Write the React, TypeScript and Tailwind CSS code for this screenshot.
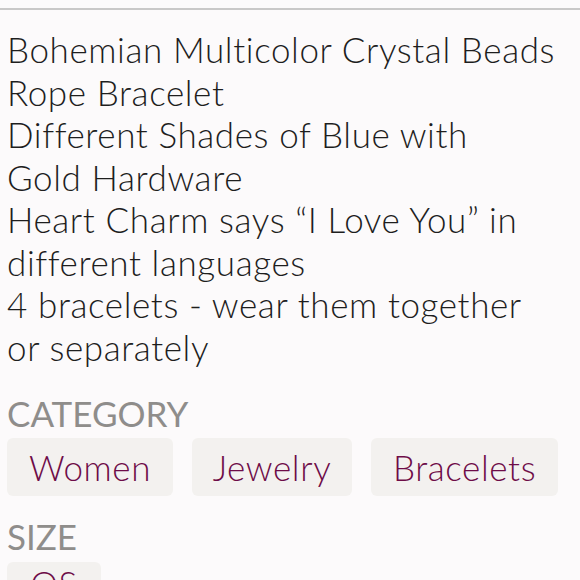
import React from "react";

const lines = [
    "Bohemian Multicolor Crystal Beads",
    "Rope Bracelet",
    "Different Shades of Blue with",
    "Gold Hardware",
    "Heart Charm says \u201cI Love You\u201d in",
    "different languages",
    "4 bracelets - wear them together",
    "or separately",
];

function Chip({ label, w, top }: { label: string; w: string; top?: boolean }) {
    return (
        <div
            className={`h-[58px] ${w} shrink-0 rounded-md bg-[#f3f1ef] flex justify-center text-[35px] font-light tracking-[0.6px] text-[#6e0c48] ${
                top ? "items-start pt-[1px] leading-[40px]" : "items-center"
            }`}
        >
            {label}
        </div>
    );
}

export default function App() {
    return (
        <div className="w-[580px] h-[580px] overflow-hidden bg-[#fcfafb] font-['Lato',sans-serif] [font-variant-ligatures:none]">
            <div className="h-[8px]" />
            <div className="h-[2px] bg-[#c9c8c8]" />
            <div className="pl-[7px] pt-[18px] text-[35px] leading-[42.5px] font-light tracking-[0.6px] text-[#1e1e1e] whitespace-nowrap">
                {lines.map((l) => (
                    <div key={l}>{l}</div>
                ))}
            </div>
            <div className="pl-[7px] mt-[25px] text-[35px] leading-[40px] text-[#8f8d8b]">CATEGORY</div>
            <div className="pl-[7px] mt-[5px] flex gap-[19px]">
                <Chip label="Women" w="w-[166px]" />
                <Chip label="Jewelry" w="w-[160px]" />
                <Chip label="Bracelets" w="w-[187px]" />
            </div>
            <div className="pl-[7px] mt-[20px] text-[35px] leading-[40px] text-[#8f8d8b]">SIZE</div>
            <div className="pl-[7px] mt-[6px] flex">
                <Chip label="OS" w="w-[94px]" top />
            </div>
        </div>
    );
}
